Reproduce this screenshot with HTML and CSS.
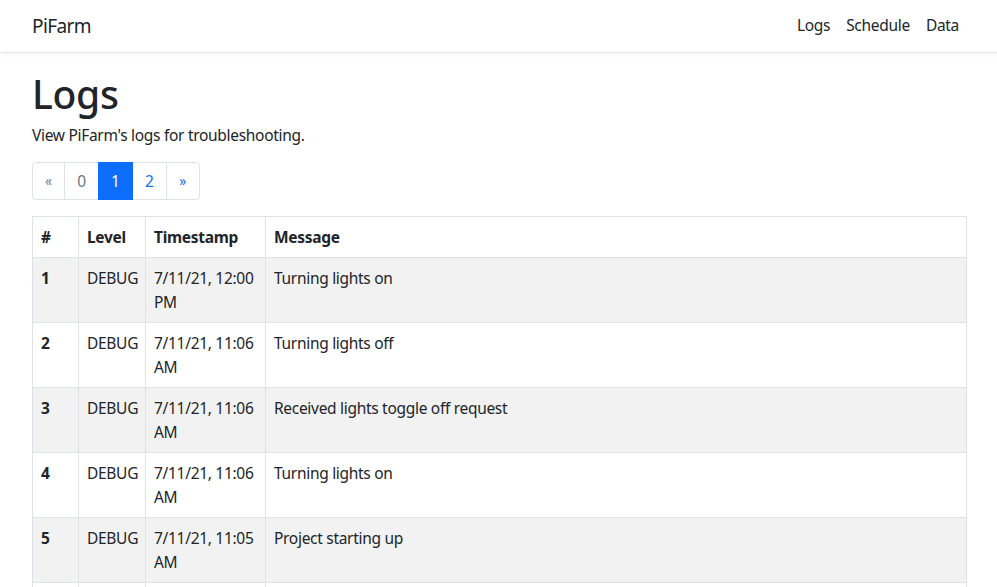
FILE: index.html
```html
<!DOCTYPE html>
<html lang="en">
<head>
<meta charset="utf-8">
<title>PiFarm</title>
<link rel="stylesheet" href="styles.css">
</head>
<body>
<nav class="navbar">
  <a class="brand" href="#">PiFarm</a>
  <ul class="nav-links">
    <li><a href="#">Logs</a></li>
    <li><a href="#">Schedule</a></li>
    <li><a href="#">Data</a></li>
  </ul>
</nav>
<main class="container">
  <h1 class="title">Logs</h1>
  <p class="lead">View PiFarm's logs for troubleshooting.</p>
  <ul class="pagination">
    <li class="page disabled"><span class="page-link arrow">&laquo;</span></li>
    <li class="page disabled"><span class="page-link">0</span></li>
    <li class="page active"><span class="page-link">1</span></li>
    <li class="page"><a class="page-link" href="#">2</a></li>
    <li class="page"><a class="page-link arrow" href="#">&raquo;</a></li>
  </ul>
  <table class="log-table">
    <colgroup>
      <col class="c-num"><col class="c-level"><col class="c-time"><col>
    </colgroup>
    <thead>
      <tr><th>#</th><th>Level</th><th>Timestamp</th><th>Message</th></tr>
    </thead>
    <tbody>
      <tr><th>1</th><td>DEBUG</td><td>7/11/21, 12:00 PM</td><td>Turning lights on</td></tr>
      <tr><th>2</th><td>DEBUG</td><td>7/11/21, 11:06 AM</td><td>Turning lights off</td></tr>
      <tr><th>3</th><td>DEBUG</td><td>7/11/21, 11:06 AM</td><td>Received lights toggle off request</td></tr>
      <tr><th>4</th><td>DEBUG</td><td>7/11/21, 11:06 AM</td><td>Turning lights on</td></tr>
      <tr><th>5</th><td>DEBUG</td><td>7/11/21, 11:05 AM</td><td>Project starting up</td></tr>
      <tr><th>6</th><td>DEBUG</td><td>7/11/21, 11:05 AM</td><td>Turning lights on</td></tr>
    </tbody>
  </table>
</main>
</body>
</html>
```
FILE: styles.css
```css
* { box-sizing: border-box; }
html, body { margin: 0; }
body {
  font-family: "Noto Sans", "Open Sans", sans-serif;
  font-size: 16px;
  line-height: 1.5;
  color: #212529;
  background: #fff;
}
a { text-decoration: none; }

.navbar {
  height: 53px;
  display: flex;
  align-items: center;
  justify-content: space-between;
  padding: 0 30px 0 32px;
  background: #fff;
  border-bottom: 1px solid #e5e5e5;
  box-shadow: 0 1px 5px rgba(0,0,0,.06);
}
.brand {
  font-size: 19px;
  color: #212529;
  letter-spacing: -0.6px;
}
.nav-links {
  display: flex;
  list-style: none;
  margin: 0;
  padding: 0;
}
.nav-links a {
  display: block;
  padding: 8px 8px;
  color: #212529;
  font-size: 15.5px;
  letter-spacing: -0.3px;
}

.container {
  padding: 18px 30px 0 32px;
}
.title {
  margin: 0;
  font-size: 39px;
  font-weight: 500;
  line-height: 1.2;
  letter-spacing: -0.3px;
}
.lead {
  margin: 6px 0 15px;
  font-size: 15.5px;
  letter-spacing: -0.3px;
}

.pagination {
  display: flex;
  list-style: none;
  margin: 0 0 16px;
  padding: 0;
}
.page-link {
  display: block;
  height: 38px;
  line-height: 36px;
  padding: 0 12px;
  border: 1px solid #dee2e6;
  margin-left: -1px;
  color: #0d6efd;
  background: #fff;
  font-size: 15.5px;
  min-width: 34px;
  text-align: center;
}
.page:first-child .page-link { margin-left: 0; border-radius: 4px 0 0 4px; min-width: 33px; }
.page:last-child .page-link { border-radius: 0 4px 4px 0; min-width: 34px; }
.page-link.arrow { font-size: 14px; }
.disabled .page-link { color: #6c757d; }
.disabled .page-link.arrow { color: #7184a4; }
.active .page-link {
  background: #0d6efd;
  border-color: #0d6efd;
  color: #fff;
  position: relative;
  z-index: 1;
}

.log-table {
  width: 100%;
  border-collapse: collapse;
  table-layout: fixed;
  font-size: 15.5px;
  letter-spacing: -0.3px;
}
.c-num { width: 46px; }
.c-level { width: 67px; }
.c-time { width: 120px; }
.log-table th, .log-table td {
  border: 1px solid #dee2e6;
  padding: 8px;
  text-align: left;
  vertical-align: top;
  line-height: 24px;
}
.log-table th { font-weight: 700; }
.log-table thead th { padding: 8px; height: 41px; vertical-align: middle; }
.log-table tbody tr:nth-child(odd) { background: #f2f2f2; }
```
